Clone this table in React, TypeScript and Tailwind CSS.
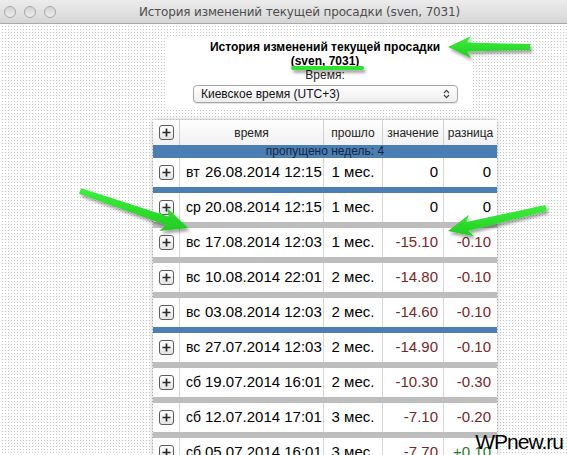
import React from "react";

type Row = { d: string; dt: string; ago: string; v: string; df: string; sep?: "blue" | "gray" };

const rows: Row[] = [
  { d: "вт", dt: "26.08.2014 12:15", ago: "1 мес.", v: "0", df: "0", sep: "blue" },
  { d: "ср", dt: "20.08.2014 12:15", ago: "1 мес.", v: "0", df: "0", sep: "gray" },
  { d: "вс", dt: "17.08.2014 12:03", ago: "1 мес.", v: "-15.10", df: "-0.10", sep: "gray" },
  { d: "вс", dt: "10.08.2014 22:01", ago: "2 мес.", v: "-14.80", df: "-0.10", sep: "gray" },
  { d: "вс", dt: "03.08.2014 12:03", ago: "2 мес.", v: "-14.60", df: "-0.10", sep: "blue" },
  { d: "вс", dt: "27.07.2014 12:03", ago: "2 мес.", v: "-14.90", df: "-0.10", sep: "gray" },
  { d: "сб", dt: "19.07.2014 16:01", ago: "2 мес.", v: "-10.30", df: "-0.30", sep: "gray" },
  { d: "сб", dt: "12.07.2014 17:01", ago: "3 мес.", v: "-7.10", df: "-0.20", sep: "gray" },
  { d: "сб", dt: "05.07.2014 16:01", ago: "3 мес.", v: "-7.70", df: "+0.10" },
];

function PlusBox() {
  return (
    <div className="w-[15px] h-[15px] rounded-[3px] border-[1.5px] border-[#5c5c5c] bg-linear-to-b from-white to-[#e4e4e4] flex items-center justify-center">
      <svg width="9" height="9" viewBox="0 0 9 9">
        <path d="M4.5 0.5v8M0.5 4.5h8" stroke="#2a2a2a" strokeWidth="1.7" />
      </svg>
    </div>
  );
}

function arrowPts(
  x1: number, y1: number, x2: number, y2: number,
  tailW: number, shaftW: number, headW: number, headL: number
) {
  const dx = x2 - x1, dy = y2 - y1;
  const L = Math.hypot(dx, dy);
  const ux = dx / L, uy = dy / L;
  const nx = -uy, ny = ux;
  const bx = x2 - ux * headL, by = y2 - uy * headL;
  const wx = bx - ux * 4, wy = by - uy * 4;
  const p: [number, number][] = [
    [x1 + nx * tailW, y1 + ny * tailW],
    [bx + nx * shaftW, by + ny * shaftW],
    [wx + nx * headW, wy + ny * headW],
    [x2, y2],
    [wx - nx * headW, wy - ny * headW],
    [bx - nx * shaftW, by - ny * shaftW],
    [x1 - nx * tailW, y1 - ny * tailW],
  ];
  return p.map(([a, b]) => `${a.toFixed(1)},${b.toFixed(1)}`).join(" ");
}

function Overlay() {
  return (
    <svg className="absolute inset-0 pointer-events-none" width="567" height="455" viewBox="0 0 567 455">
      <defs>
        <filter id="sh" x="-20%" y="-50%" width="140%" height="200%">
          <feDropShadow dx="2" dy="3" stdDeviation="1.8" floodColor="#000" floodOpacity="0.35" />
        </filter>
        <linearGradient id="g" x1="0" y1="0" x2="0" y2="1">
          <stop offset="0" stopColor="#3cf03c" />
          <stop offset="1" stopColor="#22cc22" />
        </linearGradient>
      </defs>
      <g filter="url(#sh)" fill="url(#g)">
        <polygon points={arrowPts(530, 47, 448, 47, 3, 4.5, 11, 19)} />
        <polygon points={arrowPts(80, 191, 188, 228, 3, 4.5, 12, 22)} />
        <polygon points={arrowPts(546, 208, 448, 231, 3, 4.5, 11, 20)} />
        <line x1="293" y1="68" x2="362" y2="68" stroke="#2ee22e" strokeWidth="4" strokeLinecap="round" />
      </g>
    </svg>
  );
}

export default function App() {
  return (
    <div className="relative w-[567px] h-[455px] overflow-hidden flex flex-col font-['Liberation_Sans',Arial,sans-serif] text-black">
      {/* title bar */}
      <div className="relative h-[24px] shrink-0 bg-linear-to-b from-[#ececec] to-[#d6d6d6] border-b border-[#a9a9a9] flex items-center">
        <div className="absolute left-[4px] top-[6px] flex gap-[8px]">
          <div className="w-[12px] h-[12px] rounded-full border border-[#a8a8a8] bg-linear-to-b from-[#d2d2d2] to-[#eeeeee]" />
          <div className="w-[12px] h-[12px] rounded-full border border-[#a8a8a8] bg-linear-to-b from-[#d2d2d2] to-[#eeeeee]" />
          <div className="w-[12px] h-[12px] rounded-full border border-[#a8a8a8] bg-linear-to-b from-[#d2d2d2] to-[#eeeeee]" />
        </div>
        <div className="w-full pl-[32px] text-center text-[12px] text-[#4e4e4e] font-['DejaVu_Sans',sans-serif] tracking-[-0.15px]">
          История изменений текущей просадки (sven, 7031)
        </div>
      </div>

      {/* content */}
      <div className="flex-1 flex flex-col bg-[linear-gradient(90deg,#fff_2px,transparent_2px),linear-gradient(#fff_2px,#c6c6c6_2px)] bg-[length:3px_3px]">
        <div className="ml-[166px] mt-[12px] w-[306px] h-[74px] bg-white flex flex-col pt-[4px]">
          <div className="pl-[12px] text-center text-[12px] leading-[14px] font-bold">История изменений текущей просадки</div>
          <div className="pl-[12px] text-center text-[12px] leading-[14px] font-bold">(sven, 7031)</div>
          <div className="pl-[12px] text-center text-[12px] leading-[14px] text-[#222]">Время:</div>
          <div className="ml-[27px] mt-[3px] w-[265px] h-[18px] rounded-[4px] border border-[#a6a6a6] bg-linear-to-b from-white to-[#eeeeee] flex items-center justify-between px-[7px] shadow-[0_1px_1px_rgba(0,0,0,0.12)]">
            <span className="text-[12px] leading-none text-[#111]">Киевское время (UTC+3)</span>
            <svg width="7" height="10" viewBox="0 0 7 10">
              <path d="M1 4 3.5 1.3 6 4M1 6 3.5 8.7 6 6" fill="none" stroke="#444" strokeWidth="1.2" />
            </svg>
          </div>
        </div>

        <div className="ml-[153px] mt-[10px] w-[344px] bg-white shadow-[0_0_5px_rgba(0,0,0,0.28)]">
          {/* header */}
          <div className="grid grid-cols-[26px_144px_59px_61px_54px] h-[25px] bg-linear-to-b from-white to-[#f1f1f1] text-[12px] text-[#222]">
            <div className="flex items-center justify-center"><PlusBox /></div>
            <div className="flex items-center justify-center border-l border-[#cfcfcf]">время</div>
            <div className="flex items-center justify-center border-l border-[#cfcfcf]">прошло</div>
            <div className="flex items-center justify-center border-l border-[#cfcfcf]">значение</div>
            <div className="flex items-center justify-center border-l border-[#cfcfcf]">разница</div>
          </div>
          <div className="h-[13px] bg-[#4b7eb2] text-[12px] leading-[13px] text-center text-[#142540]">пропущено недель: 4</div>
          {rows.map((r, i) => (
            <React.Fragment key={i}>
              <div className="grid grid-cols-[26px_144px_59px_61px_54px] h-[29px] text-[15px] bg-white">
                <div className="flex items-center justify-center"><PlusBox /></div>
                <div className="flex items-center border-l border-[#d6d6d6] pl-[6px]">
                  <span className="w-[19px] text-[14px]">{r.d}</span>
                  <span>{r.dt}</span>
                </div>
                <div className="flex items-center justify-center border-l border-[#d6d6d6]">{r.ago}</div>
                <div className={`flex items-center justify-end pr-[5px] border-l border-[#d6d6d6] ${r.v === "0" ? "text-black" : "text-[#7a2626]"}`}>{r.v}</div>
                <div className={`flex items-center justify-end pr-[6px] border-l border-[#d6d6d6] ${r.df === "0" ? "text-black" : r.df.startsWith("+") ? "text-[#2a7a2a]" : "text-[#7a2626]"}`}>{r.df}</div>
              </div>
              {r.sep === "blue" && <div className="h-[6px] bg-[#4b7eb2]" />}
              {r.sep === "gray" && <div className="h-[6px] bg-[#bdbdbd]" />}
            </React.Fragment>
          ))}
        </div>
      </div>

      <Overlay />
      <div className="absolute right-[4px] bottom-[1px] text-[21px] leading-[24px] tracking-[-1px] text-black font-['Liberation_Sans',Arial,sans-serif]">
        WPnew.ru
      </div>
    </div>
  );
}
